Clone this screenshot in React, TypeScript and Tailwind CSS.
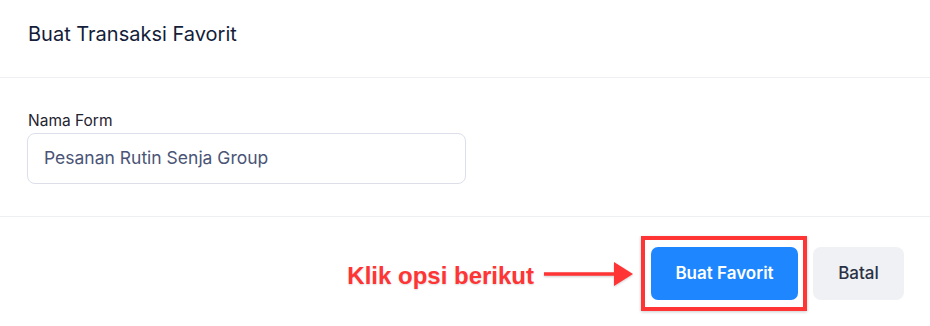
import React from "react";

export default function App() {
  return (
    <div
      className="w-[930px] h-[326px] bg-white overflow-hidden flex flex-col"
      style={{ fontFamily: "Inter, 'Noto Sans', sans-serif" }}
    >
      <div className="h-[78px] shrink-0 px-[28px] pt-[20px] border-b border-[#eeeff2]">
        <h1 className="text-[20px] leading-[28px] font-normal text-[#141d3a]">
          Buat Transaksi Favorit
        </h1>
      </div>
      <div className="shrink-0 px-[27px] pt-[33px] pb-[32px] border-b border-[#eeeff2]">
        <label className="block text-[15.5px] leading-[20px] text-[#1f2430] pl-px">
          Nama Form
        </label>
        <div className="mt-[2px] w-[439px] h-[51px] rounded-[8px] border border-[#dcdfea] flex items-center pl-[16px] text-[17.5px] text-[#4a5476]">
          Pesanan Rutin Senja Group
        </div>
      </div>
      <div className="flex-1 flex justify-end items-start pt-[30px] pr-[26px]">
        <div className="flex items-center h-[53px]">
          <span
            className="text-[24px] font-bold text-[#ff3535] leading-none mt-[5px] [text-shadow:0_1px_2px_rgba(0,0,0,0.15)]"
            style={{ fontFamily: "'Liberation Sans', Arial, sans-serif" }}
          >
            Klik opsi berikut
          </span>
          <svg
            width="90"
            height="26"
            viewBox="0 0 90 26"
            className="ml-[10px] mr-[17px] mt-[1px]"
            style={{ filter: "drop-shadow(0 1px 1px rgba(0,0,0,0.2))" }}
          >
            <line x1="0" y1="13" x2="72" y2="13" stroke="#ff3535" strokeWidth="3.5" />
            <polygon points="70,1 89,13 70,25" fill="#ff3535" />
          </svg>
          <div className="relative">
            <div className="absolute left-[-10px] right-[-9px] top-[-11px] bottom-[-11px] border-4 border-[#ff3535] shadow-[0_1px_3px_rgba(0,0,0,0.2)]" />
            <button className="relative h-[53px] w-[147px] rounded-[7px] bg-[#1e87ff] text-white text-[17px] font-semibold">
              Buat Favorit
            </button>
          </div>
          <button className="ml-[15px] h-[53px] w-[91px] rounded-[8px] bg-[#f0f1f4] text-[#2b3144] text-[17px] font-medium">
            Batal
          </button>
        </div>
      </div>
    </div>
  );
}
